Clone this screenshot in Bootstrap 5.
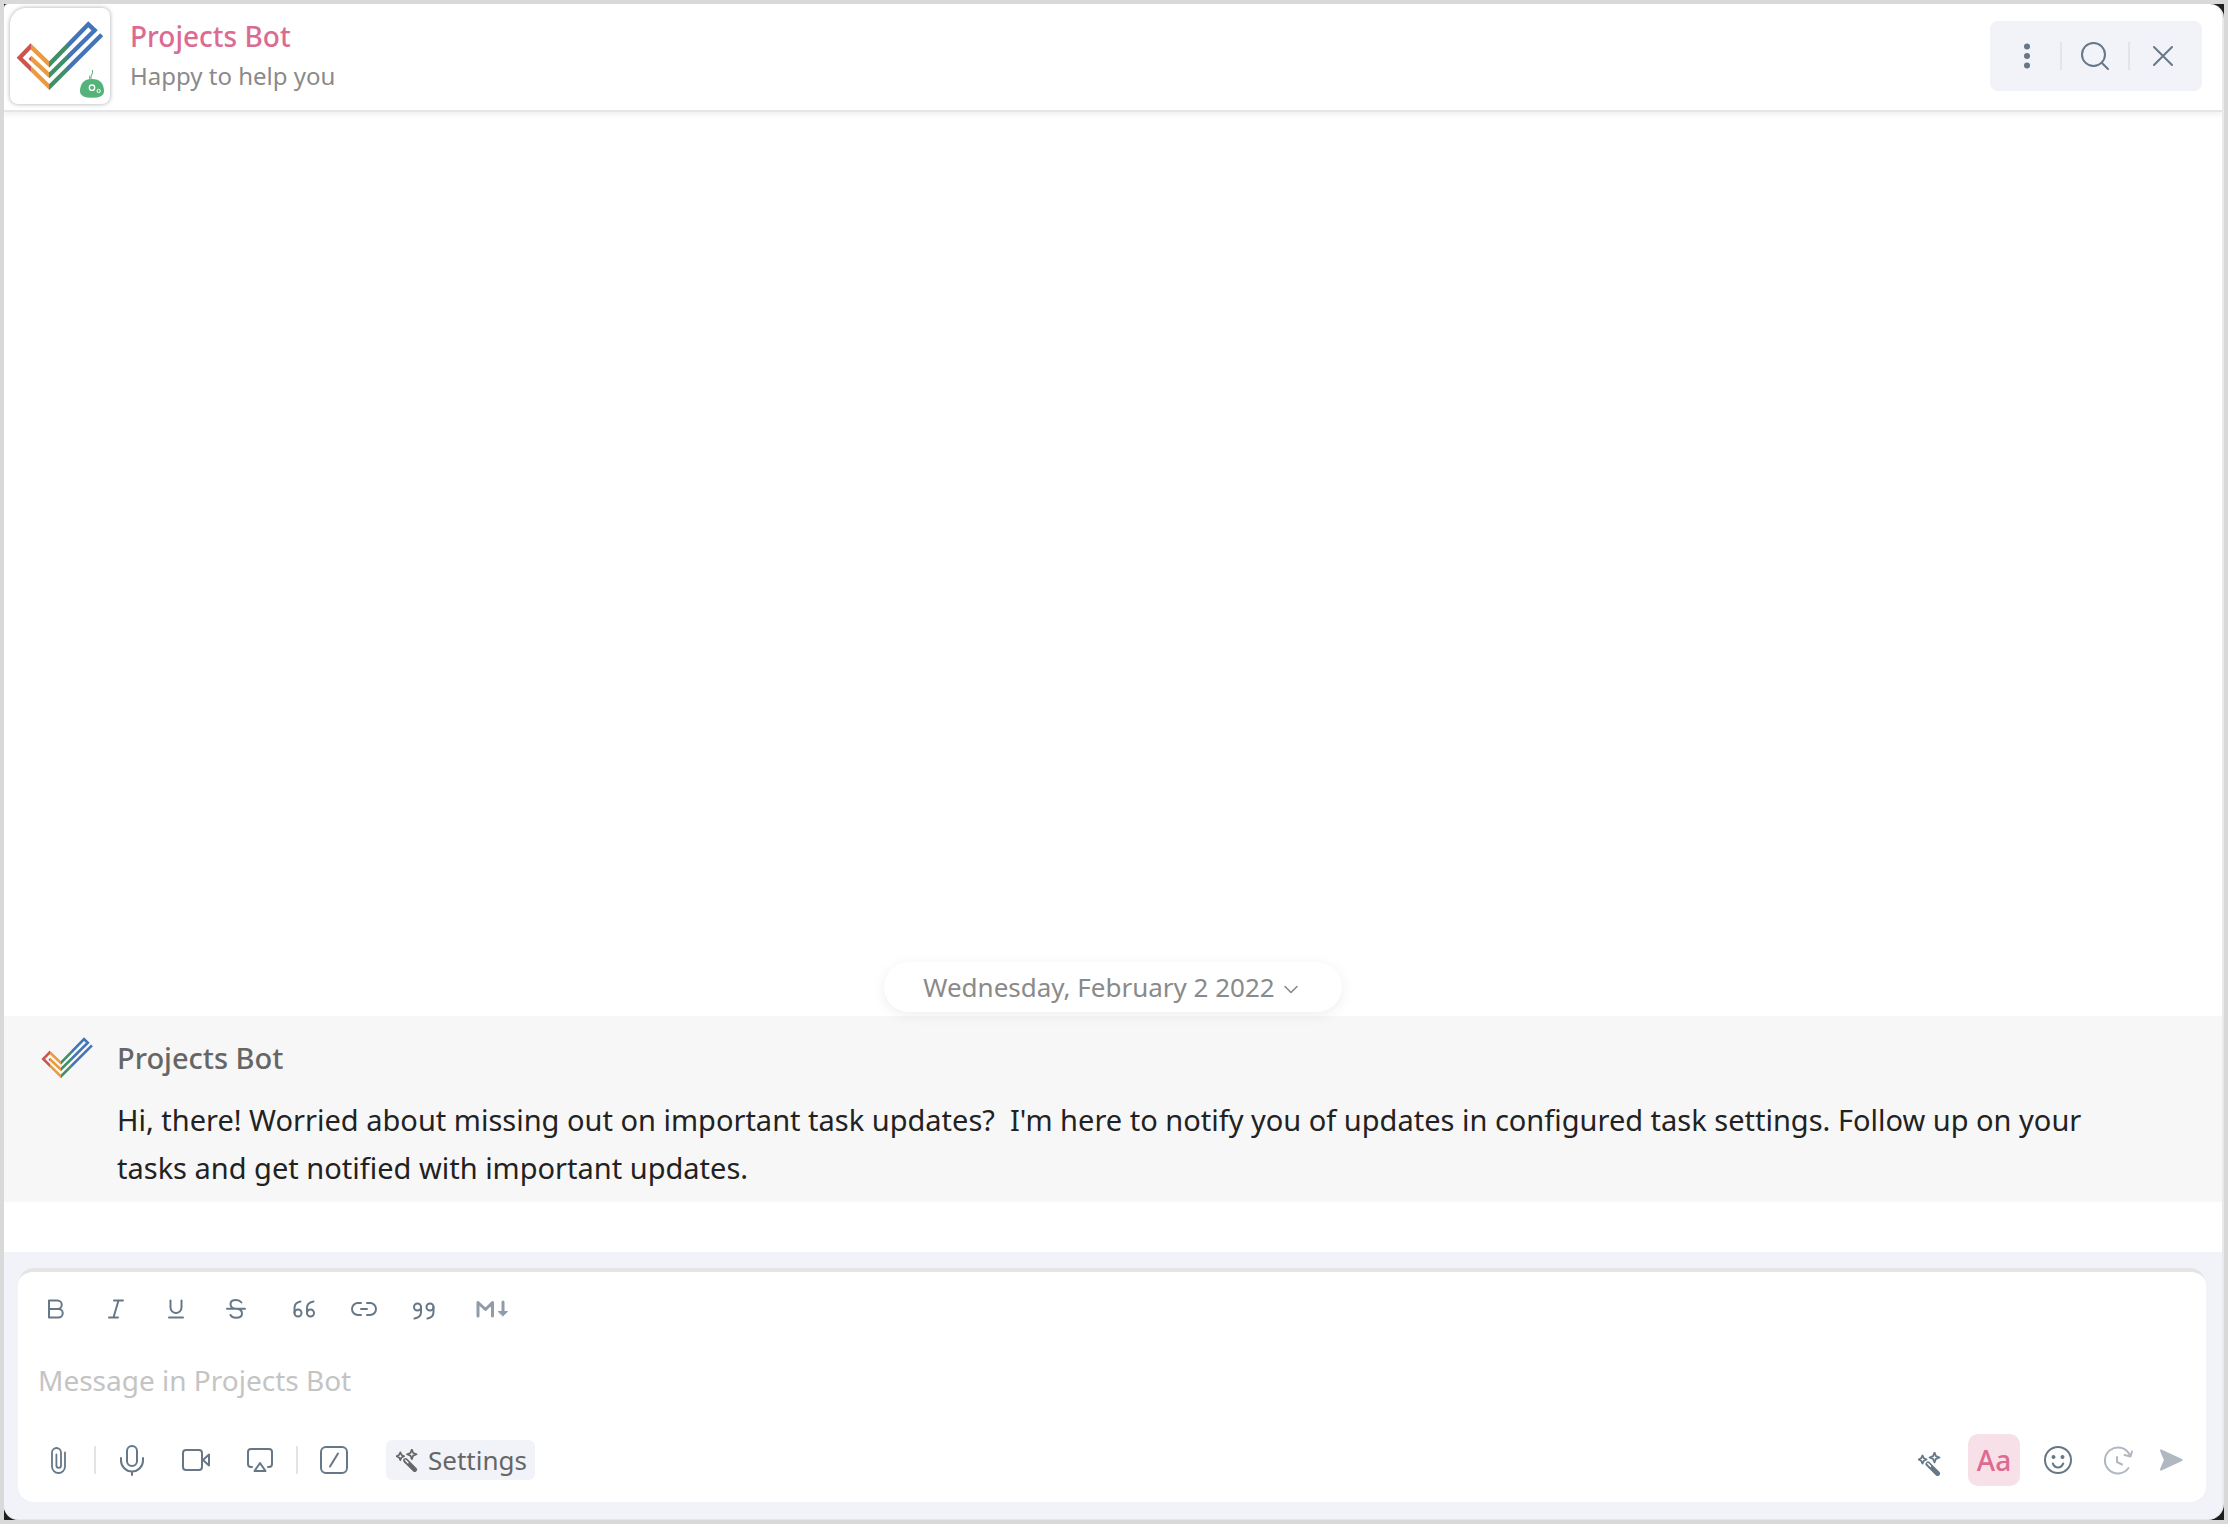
<!DOCTYPE html>
<html lang="en">
<head>
<meta charset="utf-8">
<meta name="viewport" content="width=device-width, initial-scale=1">
<title>Projects Bot</title>
<link href="https://cdn.jsdelivr.net/npm/bootstrap@5.3.0/dist/css/bootstrap.min.css" rel="stylesheet">
<style>
  :root { --ink: #667787; --soft: #f1f3f8; --pink: #dc6b92; --rule: #e4e5e6; }
  body { font-family: "Noto Sans", sans-serif; background: #1f1f1f; border: 4px solid #d9d9d9; }
  .chat-window { background: #fff; border-radius: 4px 14px 16px 14px; border-right: 2px solid #e9eaed; border-bottom: 1px solid #e6e7ea; overflow: hidden; }
  svg { display: block; flex: none; overflow: visible; }
  .line-icon { fill: none; stroke: currentColor; stroke-width: 2; stroke-linecap: round; stroke-linejoin: round; }

  .chat-header { height: 108px; padding: 4px 20px 6px 6px; border-bottom: 2px solid var(--rule); box-shadow: 0 2px 6px rgba(0,0,0,.08); z-index: 1; }
  .bot-avatar { width: 100px; height: 96px; border-radius: 16px 8px 8px 8px; box-shadow: 0 0 4px rgba(0,0,0,.35); background: #fff; }
  .bot-title { font-size: 28px; line-height: 40px; font-weight: 500; color: var(--pink); -webkit-text-stroke: 0; }
  .bot-status { font-size: 24px; line-height: 40px; color: #8a8a8a; }
  .head-actions { background: var(--soft); border-radius: 8px; height: 70px; padding: 0 6px 0 4px; }
  .icon-btn { display: inline-flex; align-items: center; justify-content: center; padding: 0; border: 0; background: none; color: var(--ink); height: 52px; width: 60px; border-radius: 6px; }
  .icon-btn:hover { background: rgba(102,119,135,.1); }
  .head-actions .icon-btn { width: 66px; }
  .sep-line { width: 2px; height: 28px; background: #e2e4e7; flex: none; }

  .date-pill { height: 50px; border: 0; border-radius: 25px; background: #fff; padding: 0 39px; font-size: 26px; color: #8a8a8a; box-shadow: 0 3px 14px rgba(0,0,0,.07); z-index: 1; }
  .bot-message { background: #f7f7f7; margin-top: 4px; margin-bottom: 50px; padding: 20px 70px 10px 37px; }
  .sender { font-size: 29px; line-height: 44px; font-weight: 500; color: #666; }
  .message-text { font-size: 29px; line-height: 48px; color: #222; white-space: pre-wrap; margin-top: 16px; }

  .composer { background: var(--soft); padding: 16px 16px 17px 14px; }
  .composer-box { background: #fff; border-top: 4px solid #e5e5e5; border-radius: 16px; padding: 16px 12px 16px 8px; }
  .format-bar .icon-btn { height: 42px; }
  .message-input { resize: none; border: 0; outline: 0; padding: 0 0 0 12px; font-size: 28px; line-height: 40px; height: 40px; margin: 30px 0 34px; color: #222; overflow: hidden; }
  .message-input::placeholder { color: #c4c4c4; opacity: 1; }
  .tool-bar .icon-btn { width: 64px; }
  .tool-bar .sep-line { margin: 0 4px; }
  .settings-chip { margin-left: 20px; height: 40px; border: 0; border-radius: 6px; background: var(--soft); color: #666; font-size: 26px; line-height: 40px; padding: 0 8px 0 10px; gap: 9px; }
  .send-bar .icon-btn.send-btn { width: 46px; }
  .send-bar .icon-btn.type-btn { width: 52px; margin: 0 8px; background: #f8e0e8; color: var(--pink); border-radius: 10px; font-size: 28px; font-weight: 500; }
  .muted-icon { color: #b0b8c1 !important; }
</style>
</head>
<body class="min-vh-100 d-flex flex-column">
<svg width="0" height="0" class="position-absolute" aria-hidden="true">
  <defs>
    <linearGradient id="bands" gradientUnits="userSpaceOnUse" x1="0" y1="0" x2="400" y2="0">
      <stop offset=".23" stop-color="#cb564f"/><stop offset=".23" stop-color="#ea9a3f"/>
      <stop offset=".37" stop-color="#ea9a3f"/><stop offset=".37" stop-color="#3f8f69"/>
      <stop offset=".505" stop-color="#3f8f69"/><stop offset=".505" stop-color="#4373b8"/>
    </linearGradient>
    <symbol id="check-logo" viewBox="48 62 262 212">
      <path d="M305 104 148 261 59 173 92 139 148 193 265 73 284 91 148 226 90 172" fill="none" stroke="url(#bands)" stroke-width="13"/>
    </symbol>
    <symbol id="wand" viewBox="0 0 24 24">
      <path d="M4.500 3.500 5.800 6.200 8.500 7.500 5.800 8.800 4.500 11.500 3.200 8.800.5 7.500 3.200 6.200ZM16.500.5 17.900 4.100 21.500 5.500 17.900 6.900 16.500 10.500 15.100 6.900 11.500 5.500 15.100 4.100Z" fill="none" stroke="currentColor" stroke-width="1.800" stroke-linejoin="round"/>
      <path d="M10 12 19.500 21.500" fill="none" stroke="currentColor" stroke-width="5" stroke-linecap="round"/>
      <path d="M9.800 11.600 12.500 14.300" fill="none" stroke="#fff" stroke-width="1.400" stroke-linecap="round"/>
    </symbol>
  </defs>
</svg>

<main class="chat-window flex-grow-1 d-flex flex-column">
  <header class="chat-header d-flex align-items-center position-relative">
    <div class="bot-avatar">
      <svg width="100" height="96" viewBox="30 24 300 288" role="img" aria-label="Projects Bot logo">
        <use href="#check-logo" x="48" y="62" width="262" height="212"/>
        <path d="M240 275Q240 237 276 237T312 275Q312 293 276 293T240 275Z" fill="#54b27b"/>
        <path d="M269 240V227M273 238Q272 228 276 222 279 217 277 210" fill="none" stroke="#54b27b" stroke-width="3"/>
        <circle cx="276" cy="263" r="8" fill="none" stroke="#fff" stroke-width="4"/>
        <circle cx="296" cy="273" r="5" fill="none" stroke="#fff" stroke-width="3"/>
      </svg>
    </div>
    <div class="ms-3 ps-1 flex-grow-1">
      <h1 class="bot-title mb-0">Projects Bot</h1>
      <p class="bot-status mb-0">Happy to help you</p>
    </div>
    <div class="head-actions d-flex align-items-center">
      <button type="button" class="icon-btn" aria-label="More options">
        <svg width="6" height="26" viewBox="0 0 6 26" fill="currentColor"><circle cx="3" cy="3.500" r="3"/><circle cx="3" cy="13" r="3"/><circle cx="3" cy="22.500" r="3"/></svg>
      </button>
      <span class="sep-line"></span>
      <button type="button" class="icon-btn" aria-label="Search">
        <svg class="line-icon" width="28" height="28" viewBox="0 0 28 28"><circle cx="12.500" cy="12.500" r="11.500"/><path d="M20.700 20.700 27 27"/></svg>
      </button>
      <span class="sep-line"></span>
      <button type="button" class="icon-btn" aria-label="Close">
        <svg class="line-icon" width="20" height="20" viewBox="0 0 20 20"><path d="M1 1 19 19M19 1 1 19"/></svg>
      </button>
    </div>
  </header>

  <section class="flex-grow-1 d-flex flex-column justify-content-end" aria-label="Conversation">
    <button type="button" class="date-pill d-flex align-items-center align-self-center position-relative">
      Wednesday, February 2 2022
      <svg class="line-icon ms-2 mt-1 me-1" width="16" height="9" viewBox="0 0 16 9"><path d="M2 1.500 8 7.500 14 1.500" stroke-width="1.600"/></svg>
    </button>
    <article class="bot-message">
      <div class="d-flex align-items-center">
        <svg width="52" height="42" role="img" aria-label="Projects Bot"><use href="#check-logo" width="52" height="42"/></svg>
        <h2 class="sender mb-0 ms-4">Projects Bot</h2>
      </div>
      <div class="d-flex">
        <div class="px-4"></div>
        <p class="message-text mb-0 ms-4 ps-1">Hi, there! Worried about missing out on important task updates?  I'm here to notify you of updates in configured task settings. Follow up on your tasks and get notified with important updates.</p>
      </div>
    </article>
  </section>

  <form class="composer">
    <div class="composer-box">
      <div class="format-bar d-flex" role="toolbar" aria-label="Text formatting">
        <button type="button" class="icon-btn" aria-label="Bold"><svg class="line-icon" width="16" height="20" viewBox="0 0 16 20"><path d="M1 1.500V18.500H10.500A4.250 4.250 0 0 0 10.500 10H1H9.500A4.250 4.250 0 0 0 9.500 1.500Z"/></svg></button>
        <button type="button" class="icon-btn" aria-label="Italic"><svg class="line-icon" width="16" height="20" viewBox="0 0 16 20"><path d="M6 1.500H15M1 18.500H10M10.500 1.500 5.500 18.500"/></svg></button>
        <button type="button" class="icon-btn" aria-label="Underline"><svg class="line-icon" width="16" height="20" viewBox="0 0 16 20"><path d="M2.500 1.500V8.500A5.500 5.500 0 0 0 13.500 8.500V1.500M1 18.500H15"/></svg></button>
        <button type="button" class="icon-btn" aria-label="Strikethrough"><svg class="line-icon" width="20" height="20" viewBox="0 0 20 20"><path d="M15.500 3.500Q13.500 1 10 1 4.500 1 4.500 5 4.500 9.500 10 9.800 16 10 16 14.500 16 18.800 10 18.800 6 18.800 4.500 16M1 9.800H19"/></svg></button>
        <button type="button" class="icon-btn ms-2" aria-label="Quote"><svg class="line-icon" width="22" height="18" viewBox="0 0 22 18"><circle cx="5" cy="13" r="3.500"/><circle cx="17.500" cy="13" r="3.500"/><path d="M1.500 13V8Q1.500 2.500 7.500 1.500M14 13V8Q14 2.500 20.500 1.500"/></svg></button>
        <button type="button" class="icon-btn" aria-label="Insert link"><svg class="line-icon" width="26" height="14" viewBox="0 0 26 14"><path d="M10 1H7A6 6 0 0 0 7 13H10M16 1H19A6 6 0 0 1 19 13H16M10 7H16"/></svg></button>
        <button type="button" class="icon-btn" aria-label="Block quote"><svg class="line-icon mt-1" width="22" height="18" viewBox="0 0 22 18"><circle cx="4.500" cy="5" r="3.500"/><circle cx="17" cy="5" r="3.500"/><path d="M8 5V10Q8 15.500 1.500 16.500M20.500 5V10Q20.500 15.500 14.500 16.500"/></svg></button>
        <button type="button" class="icon-btn ms-2" aria-label="Markdown"><svg width="32" height="18" viewBox="0 0 32 18" fill="none" stroke="#919ca8" stroke-width="3" stroke-linecap="round" stroke-linejoin="round"><path d="M2 16V2.500L9.500 9.500 16.500 2.500V16M27 2V11"/><path d="M22.500 11.500H31.500L27 15.800Z" fill="#919ca8" stroke-width="1"/></svg></button>
      </div>

      <textarea class="message-input d-block w-100" rows="1" placeholder="Message in Projects Bot" aria-label="Message in Projects Bot"></textarea>

      <div class="d-flex justify-content-between align-items-center">
        <div class="tool-bar d-flex align-items-center">
          <button type="button" class="icon-btn" aria-label="Attach file"><svg class="line-icon" width="15" height="27" viewBox="0 0 15 27"><path d="M14 5.500V19.500A6.500 6.500 0 0 1 1 19.500V5.500A4.500 4.500 0 0 1 10 5.500V18.500A2.300 2.300 0 0 1 5.400 18.500V7.500" stroke-width="1.800"/></svg></button>
          <span class="sep-line"></span>
          <button type="button" class="icon-btn" aria-label="Record audio"><svg class="line-icon" width="24" height="31" viewBox="0 0 24 31"><rect x="7" y="1" width="10" height="20" rx="5"/><path d="M1 13V15.500A11 11 0 0 0 23 15.500V13M12 26.500V30"/></svg></button>
          <button type="button" class="icon-btn" aria-label="Record video"><svg class="line-icon" width="28" height="22" viewBox="0 0 28 22"><rect x="1" y="1" width="19" height="20" rx="3"/><path d="M21 11 27 5.500V16.500Z"/></svg></button>
          <button type="button" class="icon-btn" aria-label="Share screen"><svg class="line-icon" width="26" height="24" viewBox="0 0 26 24"><path d="M5 19H4A3 3 0 0 1 1 16V4A3 3 0 0 1 4 1H22A3 3 0 0 1 25 4V16A3 3 0 0 1 22 19H21M13 15 18.500 23H7.500Z"/></svg></button>
          <span class="sep-line"></span>
          <button type="button" class="icon-btn" aria-label="Slash commands"><svg class="line-icon" width="28" height="28" viewBox="0 0 28 28"><rect x="1" y="1" width="26" height="26" rx="5"/><path d="M18 7.500 10 20.500"/></svg></button>
          <button type="button" class="settings-chip d-flex align-items-center"><svg width="23" height="23"><use href="#wand" width="23" height="23"/></svg>Settings</button>
        </div>
        <div class="send-bar d-flex align-items-center">
          <button type="button" class="icon-btn" aria-label="Suggestions"><svg class="mt-2" width="24" height="24"><use href="#wand" width="24" height="24"/></svg></button>
          <button type="button" class="icon-btn type-btn" aria-label="Toggle formatting">Aa</button>
          <button type="button" class="icon-btn" aria-label="Emoji"><svg class="line-icon" width="28" height="28" viewBox="0 0 28 28"><circle cx="14" cy="14" r="13"/><path d="M8.800 17.500Q10.500 21.500 14 21.500T19.200 17.500"/><g fill="currentColor" stroke="none"><circle cx="9.500" cy="11" r="2"/><circle cx="18.500" cy="11" r="2"/></g></svg></button>
          <button type="button" class="icon-btn muted-icon" aria-label="Schedule message"><svg class="line-icon" width="29" height="28" viewBox="0 0 29 28"><path d="M24.500 22A13 13 0 1 1 25.500 8.500M28 5.500 26.500 10.500 20.500 9M13 11V16L18 18.500"/></svg></button>
          <button type="submit" class="icon-btn send-btn muted-icon" aria-label="Send"><svg width="24" height="22" viewBox="0 0 24 22"><path d="M2 1.500 22.500 11 2 20.500 6 11Z" fill="currentColor" stroke="currentColor" stroke-width="2" stroke-linejoin="round"/></svg></button>
        </div>
      </div>
    </div>
  </form>
</main>
<script src="https://cdn.jsdelivr.net/npm/bootstrap@5.3.0/dist/js/bootstrap.bundle.min.js"></script>
</body>
</html>
